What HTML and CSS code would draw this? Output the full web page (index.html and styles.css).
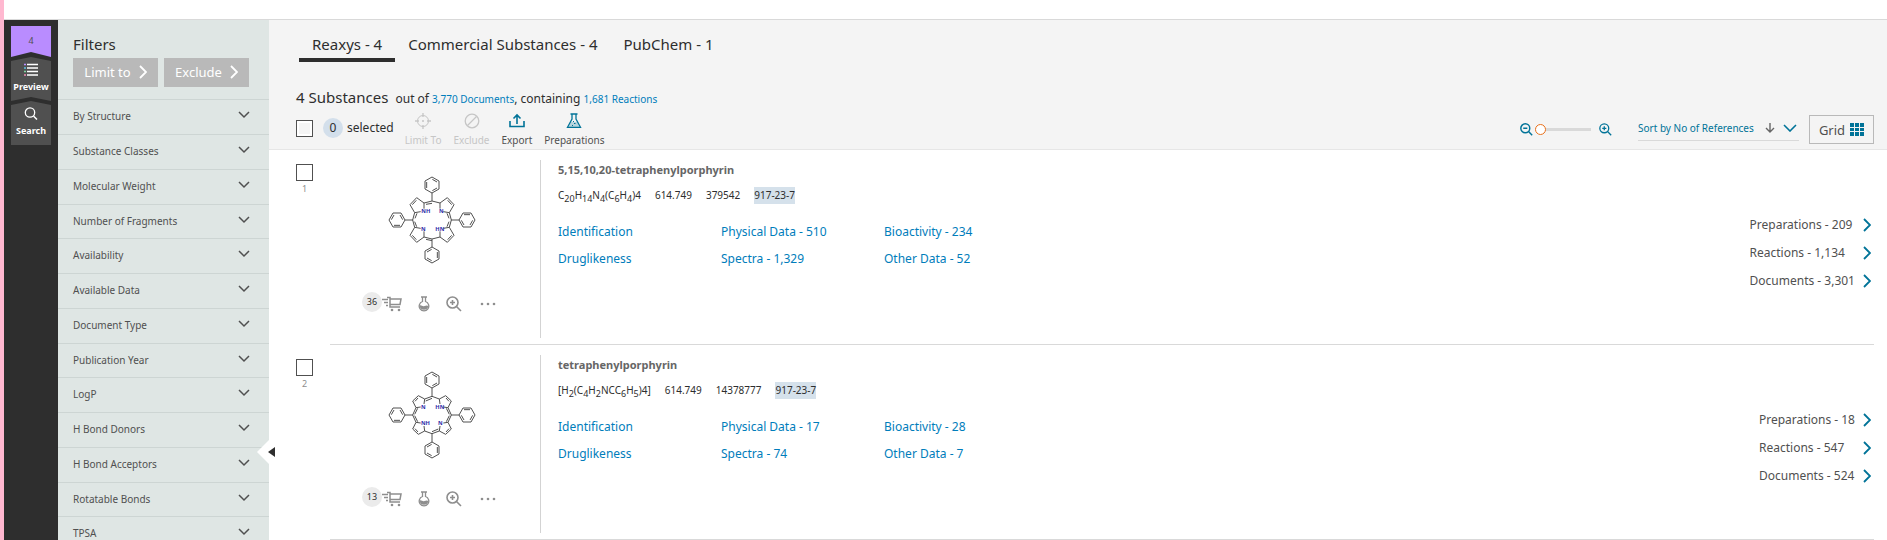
FILE: index.html
```html
<!DOCTYPE html>
<html lang="en">
 <head>
  <title>Reaxys - Substances</title>
  <meta charset="utf-8"/>
  <link rel="stylesheet" href="styles.css">
 </head>
 <body>
	<!-- shared icons -->
	<svg class="defs" width="0" height="0" aria-hidden="true">
		<symbol id="down" viewBox="0 0 12 8"><path d="M1 1l5 5 5-5" fill="none" stroke="currentColor" stroke-width="1.5"/></symbol>
		<symbol id="right" viewBox="0 0 8 14"><path d="M1 1l6 6-6 6" fill="none" stroke="currentColor" stroke-width="1.8"/></symbol>
		<symbol id="cart" viewBox="0 0 20 16">
			<path d="M5 1.500h3v9.500h10M8 3h11l-1 5.500H8M0 3.500h6M2 6.500h4M4 9.500h2" fill="none" stroke="currentColor" stroke-width="1.500"/>
			<circle cx="10" cy="14" r="1.300" fill="currentColor"/><circle cx="17" cy="14" r="1.300" fill="currentColor"/>
		</symbol>
		<symbol id="flask" viewBox="0 0 12 16">
			<path d="M3 1h6M4.500 1v4.500a4.800 4.800 0 1 0 3 0V1" fill="none" stroke="currentColor" stroke-width="1.300"/>
			<path d="M1.500 9.500c2-1 3 1.500 5 .5s3-.5 4 0a4.600 4.600 0 0 1-9 0z" fill="currentColor"/>
		</symbol>
		<symbol id="zoomin" viewBox="0 0 16 16">
			<path d="M10.500 10.500l4.500 4.500M6.500 4v5M4 6.500h5" fill="none" stroke="currentColor" stroke-width="1.600"/>
			<circle cx="6.500" cy="6.500" r="5.500" fill="none" stroke="currentColor" stroke-width="1.600"/>
		</symbol>
		<symbol id="zoomout" viewBox="0 0 16 16">
			<path d="M10.500 10.500l4.500 4.500M4 6.500h5" fill="none" stroke="currentColor" stroke-width="1.800"/>
			<circle cx="6.500" cy="6.500" r="5.500" fill="none" stroke="currentColor" stroke-width="1.800"/>
		</symbol>
		<symbol id="dots" viewBox="0 0 16 4">
			<g fill="currentColor"><circle cx="2" cy="2" r="1.300"/><circle cx="8" cy="2" r="1.300"/><circle cx="14" cy="2" r="1.300"/></g>
		</symbol>
		<!-- phenyl ring with its bond to the macrocycle -->
		<g id="phenyl">
			<path d="M0-57V-81M0-81L-21-93V-117L0-129L21-117V-93ZM-16-96V-114M1-122L15-114M15-96L1-88"/>
		</g>
		<g id="pyrroleA">
			<path d="M0-57L-24-51L-46-67L-66-46L-52-22L-58 0M-47-59L-59-46M-52-22L-34-25M-24-51L-24-34"/>
		</g>
		<g id="pyrroleB">
			<path d="M0-56L-22-48L-41-58L-58-42L-48-22L-58 0M-42-51L-51-41M-48-22L-34-24M-22-48L-24-33"/>
		</g>
	</svg>

	<div id="wrap">
		<nav class="rail">
			<button class="flag count">4</button>
			<button class="flag">
				<svg width="14" height="13" viewBox="0 0 14 13"><path d="M3 1.500h11M3 5h11M3 8.500h11M3 12h11" stroke="#fff" stroke-width="1.500"/><path d="M0 1.500h2" stroke="#b98cff" stroke-width="1.500"/><path d="M0 5h2" stroke="#5bc5e8" stroke-width="1.500"/><path d="M0 8.500h2" stroke="#7fd6a0" stroke-width="1.500"/><path d="M0 12h2" stroke="#f08cb4" stroke-width="1.500"/></svg>
				Preview
			</button>
			<button class="flag last">
				<svg width="14" height="13" viewBox="0 0 14 13"><circle cx="6" cy="5.500" r="4.700" fill="none" stroke="#fff" stroke-width="1.300"/><path d="M9.500 9l3.500 3.500" stroke="#fff" stroke-width="1.500"/></svg>
				Search
			</button>
		</nav>

		<aside class="filters">
			<h2>Filters</h2>
			<div class="filterBtns">
				<button>Limit to <svg width="8" height="14"><use href="#right"/></svg></button>
				<button>Exclude <svg width="8" height="14"><use href="#right"/></svg></button>
			</div>
			<ul>
				<li><button>By Structure <svg width="12" height="8"><use href="#down"/></svg></button></li>
				<li><button>Substance Classes <svg width="12" height="8"><use href="#down"/></svg></button></li>
				<li><button>Molecular Weight <svg width="12" height="8"><use href="#down"/></svg></button></li>
				<li><button>Number of Fragments <svg width="12" height="8"><use href="#down"/></svg></button></li>
				<li><button>Availability <svg width="12" height="8"><use href="#down"/></svg></button></li>
				<li><button>Available Data <svg width="12" height="8"><use href="#down"/></svg></button></li>
				<li><button>Document Type <svg width="12" height="8"><use href="#down"/></svg></button></li>
				<li><button>Publication Year <svg width="12" height="8"><use href="#down"/></svg></button></li>
				<li><button>LogP <svg width="12" height="8"><use href="#down"/></svg></button></li>
				<li><button>H Bond Donors <svg width="12" height="8"><use href="#down"/></svg></button></li>
				<li><button>H Bond Acceptors <svg width="12" height="8"><use href="#down"/></svg></button></li>
				<li><button>Rotatable Bonds <svg width="12" height="8"><use href="#down"/></svg></button></li>
				<li><button>TPSA <svg width="12" height="8"><use href="#down"/></svg></button></li>
			</ul>
		</aside>

		<main>
			<button class="collapse" aria-label="Hide filters">
				<svg width="18" height="24" viewBox="0 0 18 24"><path d="M12 0L0 12l12 12z" fill="#fff"/><path d="M18 7v10l-7-5z" fill="#2e2e2e"/></svg>
			</button>
			<header>
				<div class="tabs">
					<a class="on" href="#">Reaxys - 4</a>
					<a href="#">Commercial Substances - 4</a>
					<a href="#">PubChem - 1</a>
				</div>
				<p class="summary"><strong>4 Substances</strong> out of <a href="#">3,770 Documents</a>, containing <a href="#">1,681 Reactions</a></p>
				<div class="toolbar">
					<input type="checkbox" id="all" aria-label="Select all"/>
					<label class="selected" for="all"><span class="round">0</span>selected</label>
					<div class="tools">
						<button disabled>
							<svg width="16" height="16" viewBox="0 0 16 16"><path d="M8 0v4M8 12v4M0 8h4M12 8h4" stroke="currentColor" stroke-width="1.300"/><circle cx="8" cy="8" r="5.500" fill="none" stroke="currentColor"/><circle cx="8" cy="8" r="1" fill="currentColor"/></svg>
							Limit To
						</button>
						<button disabled>
							<svg width="16" height="16" viewBox="0 0 16 16"><circle cx="8" cy="8" r="6.800" fill="none" stroke="currentColor" stroke-width="1.300"/><path d="M3.500 12.500l9-9" stroke="currentColor" stroke-width="1.300"/></svg>
							Exclude
						</button>
						<button>
							<svg width="16" height="16" viewBox="0 0 16 16"><path d="M1 8v5.500h14V8M8 11V2M4.500 5.500L8 2l3.500 3.500" fill="none" stroke="#007398" stroke-width="1.600"/></svg>
							Export
						</button>
						<button>
							<svg width="16" height="16" viewBox="0 0 16 16"><path d="M4.500 1h7M6 1v5L1.500 14.300h13L10 6V1" fill="none" stroke="#007398" stroke-width="1.300"/><path d="M5 9h6l2.500 5h-11z" fill="#007398" opacity=".25"/><path d="M7 8.500h1M8 10.500h1.500M6 12.500h1" stroke="#007398"/></svg>
							Preparations
						</button>
					</div>
					<div class="zoom">
						<svg width="13" height="13"><use href="#zoomout"/></svg>
						<input type="range" min="0" max="10" value="0" aria-label="Structure size"/>
						<svg width="13" height="13"><use href="#zoomin"/></svg>
					</div>
					<div class="sort">
						<select aria-label="Sort order"><option>Sort by No of References</option></select>
						<svg width="10" height="10" viewBox="0 0 10 10"><path d="M5 0v9M1 5l4 4 4-4" fill="none" stroke="#666" stroke-width="1.400"/></svg>
						<svg class="blue" width="14" height="8" viewBox="0 0 14 8"><path d="M1 1l6 6 6-6" fill="none" stroke="currentColor" stroke-width="1.600"/></svg>
					</div>
					<button class="grid">Grid
						<svg width="14" height="13" viewBox="0 0 14 13"><path d="M0 0h4v4H0zM5 0h4v4H5zM10 0h4v4h-4zM0 5h4v3H0zM5 5h4v3H5zM10 5h4v3h-4zM0 9h4v4H0zM5 9h4v4H5zM10 9h4v4h-4z" fill="#007398"/></svg>
					</button>
				</div>
			</header>

			<article>
				<div class="pick">
					<input type="checkbox" id="s1"/>
					<label for="s1">1</label>
				</div>
				<div class="card">
					<div class="structure">
						<svg width="96" height="96" viewBox="-144 -144 288 288" fill="none" stroke="#505050" stroke-width="3">
							<use href="#phenyl"/><use href="#phenyl" transform="rotate(90)"/><use href="#phenyl" transform="rotate(180)"/><use href="#phenyl" transform="rotate(270)"/>
							<use href="#pyrroleA"/><use href="#pyrroleA" transform="scale(-1 1)"/><use href="#pyrroleA" transform="scale(1 -1)"/><use href="#pyrroleA" transform="scale(-1 -1)"/>
							<path d="M-18-47L0-50M-18 58L0 62M-51-5L-45-20M51-5L45-20M-52 5L-46 20M51 5L45 20"/>
							<g class="atoms"><text x="-32" y="-20">NH</text><text x="21" y="-20">N</text><text x="-33" y="33">N</text><text x="10" y="33">HN</text></g>
						</svg>
						<div class="actions">
							<span class="round">36</span>
							<button aria-label="Suppliers"><svg width="20" height="16"><use href="#cart"/></svg></button>
							<button aria-label="Synthesize"><svg width="12" height="16"><use href="#flask"/></svg></button>
							<button aria-label="Enlarge"><svg width="16" height="16"><use href="#zoomin"/></svg></button>
							<button class="more" aria-label="More"><svg width="16" height="4"><use href="#dots"/></svg></button>
						</div>
					</div>
					<div class="detail">
						<h3>5,15,10,20-tetraphenylporphyrin</h3>
						<p class="facts"><span>C<sub>20</sub>H<sub>14</sub>N<sub>4</sub>(C<sub>6</sub>H<sub>4</sub>)4</span><span>614.749</span><span>379542</span><mark>917-23-7</mark></p>
						<div class="links">
							<a href="#">Identification</a><a href="#">Physical Data - 510</a><a href="#">Bioactivity - 234</a>
							<a href="#">Druglikeness</a><a href="#">Spectra - 1,329</a><a href="#">Other Data - 52</a>
						</div>
					</div>
					<div class="counts">
						<a href="#">Preparations - 209 <svg class="blue" width="8" height="14"><use href="#right"/></svg></a>
						<a href="#">Reactions - 1,134 <svg class="blue" width="8" height="14"><use href="#right"/></svg></a>
						<a href="#">Documents - 3,301 <svg class="blue" width="8" height="14"><use href="#right"/></svg></a>
					</div>
				</div>
			</article>

			<article>
				<div class="pick">
					<input type="checkbox" id="s2"/>
					<label for="s2">2</label>
				</div>
				<div class="card">
					<div class="structure">
						<svg width="96" height="96" viewBox="-144 -144 288 288" fill="none" stroke="#505050" stroke-width="3">
							<use href="#phenyl"/><use href="#phenyl" transform="rotate(90)"/><use href="#phenyl" transform="rotate(180)"/><use href="#phenyl" transform="rotate(270)"/>
							<use href="#pyrroleB"/><use href="#pyrroleB" transform="scale(-1 1)"/><use href="#pyrroleB" transform="scale(1 -1)"/><use href="#pyrroleB" transform="scale(-1 -1)"/>
							<path d="M-19-42L0-50M19 42L0 50M-52-2L-43-20M52-2L43-20M-52 2L-43 20M52 2L43 20"/>
							<g class="atoms"><text x="-33" y="-18">N</text><text x="10" y="-18">HN</text><text x="-33" y="31">NH</text><text x="18" y="31">N</text></g>
						</svg>
						<div class="actions">
							<span class="round">13</span>
							<button aria-label="Suppliers"><svg width="20" height="16"><use href="#cart"/></svg></button>
							<button aria-label="Synthesize"><svg width="12" height="16"><use href="#flask"/></svg></button>
							<button aria-label="Enlarge"><svg width="16" height="16"><use href="#zoomin"/></svg></button>
							<button class="more" aria-label="More"><svg width="16" height="4"><use href="#dots"/></svg></button>
						</div>
					</div>
					<div class="detail">
						<h3>tetraphenylporphyrin</h3>
						<p class="facts"><span>[H<sub>2</sub>(C<sub>4</sub>H<sub>2</sub>NCC<sub>6</sub>H<sub>5</sub>)4]</span><span>614.749</span><span>14378777</span><mark>917-23-7</mark></p>
						<div class="links">
							<a href="#">Identification</a><a href="#">Physical Data - 17</a><a href="#">Bioactivity - 28</a>
							<a href="#">Druglikeness</a><a href="#">Spectra - 74</a><a href="#">Other Data - 7</a>
						</div>
					</div>
					<div class="counts">
						<a href="#">Preparations - 18 <svg class="blue" width="8" height="14"><use href="#right"/></svg></a>
						<a href="#">Reactions - 547 <svg class="blue" width="8" height="14"><use href="#right"/></svg></a>
						<a href="#">Documents - 524 <svg class="blue" width="8" height="14"><use href="#right"/></svg></a>
					</div>
				</div>
			</article>
		</main>
	</div>
 </body>
</html>
```
FILE: styles.css
```css
*{margin:0; padding:0; box-sizing:border-box;}
body{font-family:"Noto Sans", "Open Sans", sans-serif; font-size:12px; line-height:18px; color:#2e2e2e; background:#fff;}
button, input, select{font:inherit; color:inherit; border:none; background:none;}
a{color:#007dbb; text-decoration:none;}
svg{display:block; flex:none;}
ul{list-style:none;}
.defs{position:absolute;}

#wrap{display:flex; height:100vh; padding-top:19px; border-left:4px solid #ffb8d0; overflow:hidden;}

/* dark rail */
.rail{width:54px; flex:none; padding:6px 7px; background:#2e2e2e; border-top:1px solid #d9d9d9; color:#fff;}
.flag{display:flex; flex-direction:column; align-items:center; gap:2px; width:40px; height:44px; padding-top:6px; background:#505050;
font-size:9px; line-height:18px; font-weight:bold; clip-path:polygon(0 4px, 50% 0, 100% 4px, 100% 100%, 50% 40px, 0 100%);}
.flag.last{clip-path:polygon(0 4px, 50% 0, 100% 4px, 100% 100%, 0 100%);}
.flag.count{height:31px; background:#b98cff; color:#505050; font-weight:normal; clip-path:polygon(0 0, 100% 0, 100% 100%, 50% 26px, 0 100%);}

/* filters */
.filters{width:211px; flex:none; padding-top:13px; background:#dfe6e4; border-top:1px solid #d9d9d9;}
.filters h2{padding-left:15px; font-size:15px; line-height:22px; font-weight:normal;}
.filterBtns{display:flex; gap:6px; padding:3px 15px 12px; margin-right:5px;}
.filterBtns button{flex:1; display:flex; align-items:center; justify-content:center; gap:8px; height:29px; padding-bottom:1px; background:#b9b9b9; color:#fff; font-size:13px;}
.filters ul{display:grid; grid-auto-rows:35px 35px 35px 34px;}
.filters li{border-top:1px solid #cdd5d3;}
.filters li button{display:flex; justify-content:space-between; width:100%; padding:9px 19px 0 15px; font-size:10px; line-height:14px; color:#505050; text-align:left;}
.filters li svg{margin-top:2px;}

/* results */
main{position:relative; flex:1; min-width:0;}
.collapse{position:absolute; left:-12px; top:421px;}
header{padding:10px 13px 0 27px; height:131px; background:#f4f4f4; border-top:1px solid #d9d9d9; border-bottom:1px solid #e6e6e6;}
.tabs{display:flex; margin-left:3px;}
.tabs a{padding:3px 13px; line-height:22px; font-size:15px; color:#2e2e2e; border-bottom:4px solid transparent;}
.tabs a.on{border-color:#2e2e2e;}
.summary{margin-top:24px; line-height:22px;}
.summary strong{font-size:15px; font-weight:normal; margin-right:4px;}
.summary a{font-size:10px;}

input[type="checkbox"]{appearance:none; display:block; width:17px; height:17px; border:1px solid #505050; background:#fff;}
.toolbar{display:flex; align-items:flex-start; padding-top:1px;}
.toolbar input[type="checkbox"]{margin-top:9px; background:#f4f4f4; box-shadow:inset 0 0 0 2px #fff;}
.selected{display:flex; align-items:center; gap:4px; margin:7px 0 0 10px;}
.round{width:20px; height:20px; border-radius:50%; background:#d3dfeb; line-height:20px; text-align:center;}
.tools{display:flex; gap:12px; margin-left:11px;}
.tools button{display:flex; flex-direction:column; align-items:center; gap:2px; font-size:10px; line-height:18px; color:#505050;}
.tools button:disabled{color:#c6c6c6;}
.tools svg{margin-top:2px;}
.blue, .zoom{color:#007398;}
.zoom{display:flex; align-items:center; gap:2px; margin:12px 26px 0 auto;}
.zoom input{appearance:none; width:56px; height:3px; margin-right:6px; background:#d9d9d9;}
.zoom input::-webkit-slider-thumb{appearance:none; width:11px; height:11px; border:1px solid #e9711c; border-radius:50%; background:#fff;}
.sort{display:flex; align-items:center; height:26px; padding-right:2px; margin:4px 10px 0 0; border-bottom:1px solid #d9d9d9;}
.sort select{appearance:none; width:127px; font-size:10px; color:#007398;}
.sort .blue{margin-left:8px;}
.grid{display:flex; align-items:center; justify-content:center; gap:5px; width:65px; height:29px; margin-top:4px; border:1px solid #b9b9b9; color:#505050; font-size:13px;}

article{display:flex; padding:0 13px 0 27px;}
.pick{width:34px; padding-top:14px; font-size:9px; line-height:16px; color:#8e8e8e;}
.pick label{display:block; width:17px; text-align:center;}
.card{flex:1; display:flex; height:195px; padding:10px 0 6px; border-bottom:1px solid #d9d9d9;}
.structure{width:211px; border-right:1px solid #d3d3d3; padding-top:12px;}
.structure > svg{margin-left:54px;}
.atoms{fill:#2b2ba8; stroke:none; font-size:17px; font-weight:bold;}
.actions{display:flex; align-items:center; margin:23px 0 0 32px; color:#8e8e8e;}
.actions .round{background:#ebebeb; font-size:9px; color:#2e2e2e;}
.actions button{margin:5px 16px 0 0;}
.actions button.more{margin-left:2px;}
.detail{flex:1; padding-left:17px;}
.detail h3{font-size:11px; line-height:20px; color:#666;}
.facts{display:flex; gap:14px; margin-top:7px; font-size:10px; line-height:17px;}
.facts sub{font-size:9px; line-height:0;}
.facts mark{background:#d5e1eb; color:inherit;}
.links{display:grid; grid-template-columns:163px 163px 163px; grid-auto-rows:27px; margin-top:14px; line-height:27px;}
.counts{padding-top:51px;}
.counts a{display:flex; align-items:center; justify-content:space-between; gap:8px; height:28px; padding-right:3px; color:#505050;}
```
